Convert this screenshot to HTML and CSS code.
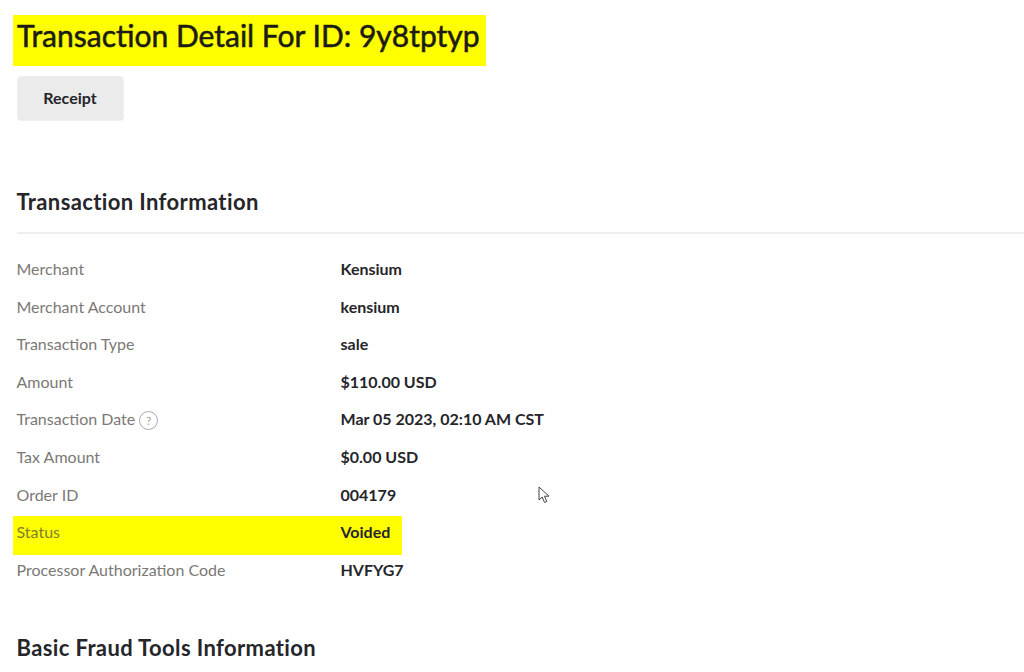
FILE: index.html
```html
<!DOCTYPE html>
<html lang="en">
<head>
<meta charset="utf-8">
<title>Transaction Detail</title>
<link rel="stylesheet" href="styles.css">
</head>
<body>
<main class="page">
  <h1 class="title"><span class="mark-title">Transaction Detail For ID: 9y8tptyp</span></h1>
  <button class="btn" type="button">Receipt</button>
  <h2 class="section first">Transaction Information</h2>
  <dl class="details">
    <div class="row"><dt>Merchant</dt><dd>Kensium</dd></div>
    <div class="row"><dt>Merchant Account</dt><dd>kensium</dd></div>
    <div class="row"><dt>Transaction Type</dt><dd>sale</dd></div>
    <div class="row"><dt>Amount</dt><dd>$110.00 USD</dd></div>
    <div class="row"><dt>Transaction Date <span class="help">?</span></dt><dd>Mar 05 2023, 02:10 AM CST</dd></div>
    <div class="row"><dt>Tax Amount</dt><dd>$0.00 USD</dd></div>
    <div class="row"><dt>Order ID</dt><dd>004179</dd></div>
    <div class="row row-mark"><dt>Status</dt><dd>Voided</dd></div>
    <div class="row"><dt>Processor Authorization Code</dt><dd>HVFYG7</dd></div>
  </dl>
  <h2 class="section second">Basic Fraud Tools Information</h2>
</main>
<svg class="cursor" width="14" height="19" viewBox="0 0 14 19" aria-hidden="true"><path d="M1 1v13l3.2-3 2.3 5.5 2.3-1-2.3-5.3H11z" fill="#fff" stroke="#444" stroke-width="1"/></svg>
</body>
</html>
```
FILE: styles.css
```css
html, body { margin: 0; background: #fff; }
body { height: 672px; overflow: hidden; position: relative; font-family: "Lato", "Noto Sans", sans-serif; color: #25252a; }
.page { padding: 15px 0 0 16.5px; }
.title { margin: 0 0 10px -3.5px; height: 51px; font-size: 30px; line-height: 41px; font-weight: 400; -webkit-text-stroke: .55px #1c1c14; }
.mark-title { display: inline-block; height: 51px; padding: 0 6px 0 4px; background: #ffff00; color: #1c1c14; }
.btn { display: block; width: 107px; height: 45px; padding: 0 0 2px; border: 1px solid #eee; border-radius: 4px; background: #ebebeb; font: 700 16px "Lato", sans-serif; color: #25252a; }
.section { margin: 0; font-size: 22px; font-weight: 700; line-height: 28px; letter-spacing: .38px; }
.first { margin-top: 67px; padding-bottom: 16px; border-bottom: 2px solid #eeeeee; }
.second { margin-top: 46px; }
.details { margin: 16px 0 0; font-size: 16px; line-height: 37.6px; }
.row { display: grid; grid-template-columns: 324px auto; height: 37.6px; }
.row dt { color: #7b7875; display: flex; align-items: center; gap: 4px; }
.row dd { margin: 0; font-weight: 700; }
.row-mark { width: fit-content; margin: 2.6px 0 -4px -3.5px; padding: 0 12px 0 3.5px; background: #ffff00; height: 39px; line-height: 32px; align-items: start; }
.row-mark dt { color: #80802c; }
.help { display: inline-flex; align-items: center; justify-content: center; width: 17px; height: 17px; border: 1px solid #aaa; border-radius: 50%; font-size: 11px; line-height: 1; color: #999; margin-top: 2px; }
.cursor { position: absolute; left: 538px; top: 486px; }
```
